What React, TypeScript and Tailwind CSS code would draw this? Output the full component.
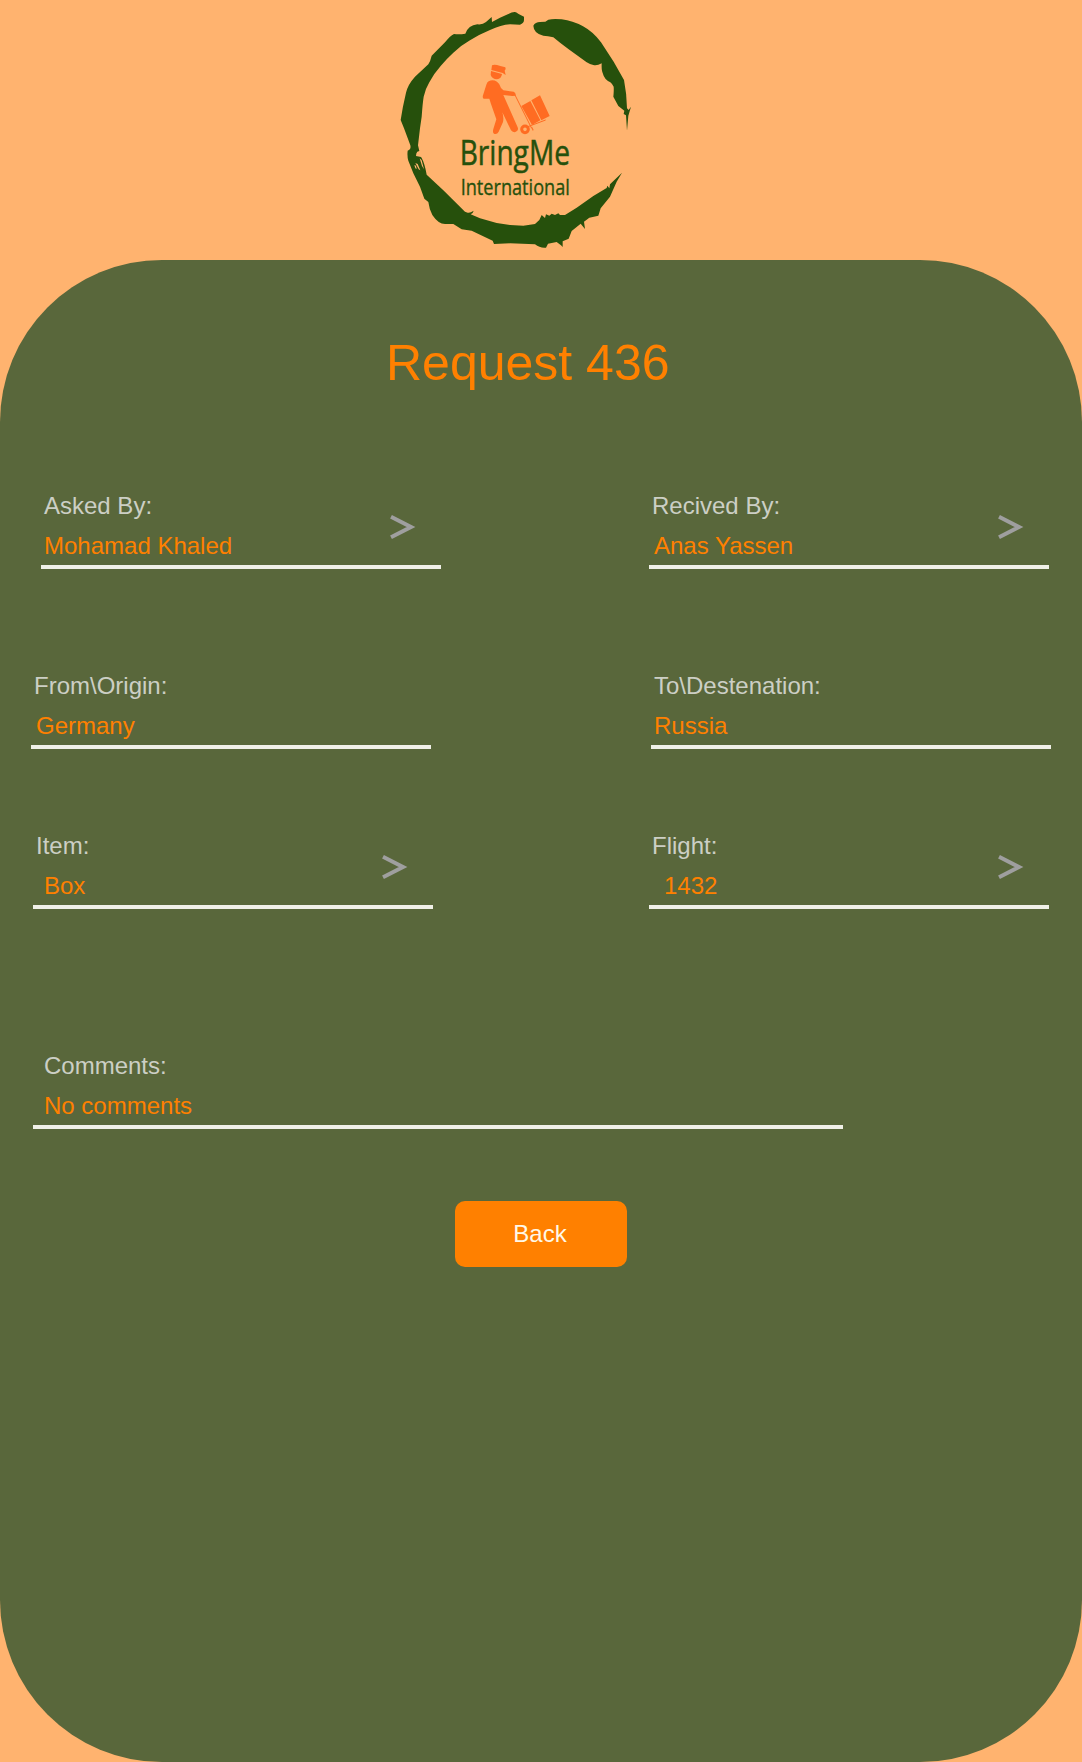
import React from "react";

function Logo() {
  return (
    <svg width="260" height="260" viewBox="0 0 780 780" className="absolute left-[390px] top-0" role="img" aria-label="BringMe International">
      <g fill="#26500c">
        <path d="M402 50Q386 44 378 37Q370 34 355 42L330 53L306 66L305 51L288 66Q278 75 262 73Q235 76 226 101Q208 104 192 102Q180 108 165 127L125 167Q121 184 115 193L75 230Q54 253 48 278Q38 320 32 360L42 385L61 436Q64 449 53 452Q51 468 55 482L70 520L90 560L103 596L115 606Q118 629 127 645Q145 672 165 672L190 672L215 688L245 692L308 722L312 732L360 730L435 733Q450 745 468 743L474 731L500 726L513 736L518 741L518 724L536 716L545 693L572 671L585 687L582 665L598 653L625 647L632 625L660 590L680 545L696 518L660 553L658 565L652 557L650 564L610 588L560 623L525 645L510 645L505 640L495 645L485 641L478 647L468 643L465 654L455 645L448 660L435 672L400 677L360 675L320 669L270 655L242 643Q249 641 251 632Q240 640 233 638L225 635L160 571L110 524Q104 490 95 474L93 471L78 468Q78 459 82 455L88 453L84 436L90 385L95 350Q98 308 101 290Q106 267 118 247Q133 219 152 198Q169 177 190 158Q212 137 240 121Q268 103 300 90Q333 75 360 73L390 74Q402 70 402 60Z" />
        <path d="M430 77Q436 66 450 66L466 65L475 59Q491 55 515 58Q548 62 579 79Q609 95 633 127L671 185L702 240Q710 280 711 325L716 330L723 320L715 347L711 392L708 346L701 342L703 332L685 318L670 290Q672 270 671 260Q668 253 661 247Q643 239 638 219Q634 211 635 190Q621 198 610 195Q600 193 590 187L535 147Q510 129 490 112Q473 108 460 107Q431 100 430 77Z" />
      </g>
      <path d="M76 489L83 492L91 511L86 508ZM89 475L95 481L102 508L96 498ZM73 495L76 505L80 507L78 497Z" fill="#ffb36f" />

      {/* Porter pulling a loaded hand truck */}
      <g transform="translate(195 165)" fill="#ff6c22">
        <path d="M111 31Q118 27 136 33L151 37Q154 42 149 47L152 60L143 54L109 45Z" />
        <path d="M108 48L141 57Q139 71 126 73Q111 72 107 60Z" />
        <path d="M101 79Q113 72 126 80Q134 85 138 99L145 106L176 110Q183 113 182 122L172 123L145 120L188 217Q192 228 181 231Q173 233 168 226L142 172Q147 188 144 201L131 230Q126 239 117 236Q112 232 115 222L124 193L108 147L103 131L86 131Q81 127 85 118L94 89Q96 82 101 79Z" />
        <path d="M179 118L230 220M216 216L272 195" fill="none" stroke="#ff6c22" strokeWidth="3" />
        <path d="M199 153L226 138L256 196L231 210ZM229 136L255 121L284 183L259 196Z" />
        <circle cx="210" cy="223" r="10" fill="none" stroke="#ff6c22" strokeWidth="9" />
        <path d="M229 217L233 227L236 225L231 215Z" />
      </g>

      <g fill="#26500c" stroke="#26500c" fontFamily="'Open Sans', sans-serif">
        <text transform="translate(209 496) scale(.757 1)" fontSize="106" strokeWidth="1.5" textLength="437" lengthAdjust="spacingAndGlyphs">BringMe</text>
        <text transform="translate(212 585) scale(.78 1)" fontSize="64" strokeWidth="1" textLength="420" lengthAdjust="spacingAndGlyphs">International</text>
      </g>
    </svg>
  );
}

type FieldProps = {
  label: string;
  value: string;
  className: string;
  labelClass: string;
  valueClass: string;
  link?: boolean;
};

function Field({ label, value, className, labelClass, valueClass, link }: FieldProps) {
  return (
    <div className={`relative h-[84px] border-b-4 border-[#f0f0e8] pt-px text-2xl leading-10 whitespace-nowrap ${className}`}>
      <div className={`text-[#cccfc5] ${labelClass}`}>{label}</div>
      <div className={`text-[#ff8000] ${valueClass}`}>{value}</div>
      {link && (
        <svg className="absolute top-[29px] right-[25px]" width="26" height="26" viewBox="0 0 26 26" fill="none">
          <path d="M1 2.8L21 13L1 23.2" stroke="#9f9f9f" strokeWidth="4" />
        </svg>
      )}
    </div>
  );
}

export default function App() {
  return (
    <div className="h-[1762px] w-[1082px] overflow-hidden bg-[#ffb36f] font-['Liberation_Sans',Arial,sans-serif]">
      <header className="relative h-[260px]">
        <Logo />
      </header>
      <main className="flex h-[1502px] flex-col rounded-[162px] bg-[#59673b]">
        <h1 className="mt-[73px] ml-[386px] h-[60px] text-[50px] leading-[60px] whitespace-nowrap text-[#ff8000]">Request 436</h1>
        <div className="mt-[92px] flex">
          <Field label="Asked By:" value="Mohamad Khaled" className="ml-[41px] w-[400px]" labelClass="pl-[3px]" valueClass="pl-[3px]" link />
          <Field label="Recived By:" value="Anas Yassen" className="ml-[208px] w-[400px]" labelClass="pl-[3px]" valueClass="pl-[5px]" link />
        </div>
        <div className="mt-24 flex">
          <Field label="From\Origin:" value="Germany" className="ml-[31px] w-[400px]" labelClass="pl-[3px]" valueClass="pl-[5px]" />
          <Field label="To\Destenation:" value="Russia" className="ml-[220px] w-[400px]" labelClass="pl-[3px]" valueClass="pl-[3px]" />
        </div>
        <div className="mt-[76px] flex">
          <Field label="Item:" value="Box" className="ml-[33px] w-[400px]" labelClass="pl-[3px]" valueClass="pl-[11px]" link />
          <Field label="Flight:" value="1432" className="ml-[216px] w-[400px]" labelClass="pl-[3px]" valueClass="pl-[15px]" link />
        </div>
        <Field label="Comments:" value="No comments" className="mt-[136px] ml-[33px] w-[810px]" labelClass="pl-[11px]" valueClass="pl-[11px]" />
        <button className="mt-[72px] h-[66px] w-[172px] self-center rounded-[10px] bg-[#ff8000] pr-[2px] text-2xl text-[#fff8e8]">Back</button>
      </main>
    </div>
  );
}
